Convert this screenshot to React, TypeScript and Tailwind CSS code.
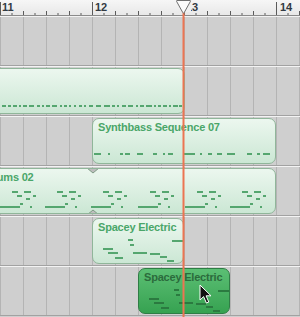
type Note = [number, number, number]; // x, y, width in page coordinates

const FONT = { fontFamily: '"Liberation Sans", Arial, sans-serif' };

// region 1: one long dotted row
const row1: Note[] = [
  [2, 105, 4], [8, 105, 3], [13, 105, 4], [19, 105, 2], [23, 105, 4], [29, 105, 5],
  [37, 105, 3], [42, 105, 2], [46, 105, 4], [52, 105, 5], [60, 105, 2], [64, 105, 3],
  [69, 105, 2], [74, 105, 2], [79, 105, 3], [84, 105, 2], [89, 105, 4], [96, 105, 5],
  [104, 105, 6], [112, 105, 3], [117, 105, 2], [122, 105, 4], [128, 105, 5], [136, 105, 2],
  [140, 105, 4], [146, 105, 6], [154, 105, 2], [158, 105, 3], [163, 105, 4], [169, 105, 2],
  [173, 105, 5], [179, 105, 3],
];

const row2: Note[] = [
  [94, 153, 7], [108, 153, 2], [120, 153, 3], [125, 153, 5], [137, 153, 6], [153, 153, 4],
  [163, 153, 2], [168, 153, 5], [183, 153, 12], [200, 153, 2], [208, 153, 4], [217, 153, 5],
  [227, 153, 8], [247, 153, 5], [257, 153, 3], [263, 153, 7],
];

// drum pattern repeats every two beats
const drums: Note[] = [12, 57, 103, 150, 197, 242].flatMap((c) => [
  [c, 191, 6], [c + 5, 195, 5], [c + 12, 191, 7], [c + 14, 198, 4], [c + 21, 195, 3],
  [c - 12, 206, 20], [c + 8, 203, 3], [c + 18, 206, 2],
] as Note[]);

const spacey: Note[] = [
  [128, 239, 5], [130, 244, 4], [103, 248, 10], [108, 252, 10], [115, 257, 8],
  [133, 252, 14], [150, 253, 10], [160, 256, 7], [167, 260, 7], [172, 240, 11],
];
const spaceyShifted: Note[] = spacey.map(([x, y, w]) => [x + 46, y + 50, w]);

function Notes({
  notes,
  left,
  top,
  color,
  notchAt,
}: {
  notes: Note[];
  left: number;
  top: number;
  color: string;
  notchAt?: number;
}) {
  return (
    <svg className="absolute inset-0 h-full w-full overflow-visible" aria-hidden>
      {notes.map(([x, y, w], i) => (
        <rect key={i} x={x - left - 1} y={y - top - 1} width={w} height={2} fill={color} />
      ))}
      {notchAt !== undefined && (
        <>
          <path d={`M${notchAt - left - 6} -1 L${notchAt - left} 4 L${notchAt - left + 6} -1 Z`} fill="#bdbdbd" stroke="#7f9a85" />
          <path d={`M${notchAt - left - 6} 46 L${notchAt - left} 41 L${notchAt - left + 6} 46 Z`} fill="#bdbdbd" stroke="#7f9a85" />
        </>
      )}
    </svg>
  );
}

function Region({
  className,
  left,
  top,
  title,
  notes,
  selected,
  notchAt,
}: {
  className: string;
  left: number;
  top: number;
  title?: string;
  notes: Note[];
  selected?: boolean;
  notchAt?: number;
}) {
  return (
    <div
      className={
        "absolute top-[1px] bottom-[1px] overflow-hidden rounded-[7px] border " +
        (selected
          ? "border-[#2f7d45] bg-gradient-to-b from-[#5bbf74] to-[#36a251] "
          : "border-[#90b69a] bg-gradient-to-b from-[#ecf7ef] to-[#cbe7d4] ") +
        className
      }
    >
      {title && (
        <div
          className={
            "whitespace-nowrap pl-[5px] pt-[2px] text-[11px] font-bold leading-[13px] tracking-[-0.2px] " +
            (selected ? "text-[#2b6b3c]" : "text-[#4aa669]")
          }
          style={FONT}
        >
          {title}
        </div>
      )}
      <Notes notes={notes} left={left} top={top} color={selected ? "#2b7a40" : "#55a66f"} notchAt={notchAt} />
    </div>
  );
}

function Track({ children }: { children?: React.ReactNode }) {
  return (
    <div className="relative h-[50px] shrink-0 border-t border-b border-t-[#f3f3f3] border-b-[#a2a2a2] bg-[repeating-linear-gradient(90deg,#b4b4b4_0px,#b4b4b4_1px,#cfcfcf_1px,#cfcfcf_23px)]">
      {children}
    </div>
  );
}

function Ruler() {
  const ticks = Array.from({ length: 27 }, (_, i) => i * 11.5);
  return (
    <div className="relative h-[16px] shrink-0 border-b border-[#8a8a8a] bg-gradient-to-b from-[#f6f6f6] to-[#e8e8e8]">
      <svg className="absolute inset-0 h-full w-full" aria-hidden>
        {ticks.map((x, i) => {
          const bar = i % 8 === 0;
          const beat = i % 2 === 0;
          const y1 = bar ? 2 : beat ? 11 : 13;
          return <line key={i} x1={x + 0.5} x2={x + 0.5} y1={y1} y2={15} stroke="#5b5b5b" strokeWidth={1} />;
        })}
      </svg>
      {/* one cell per bar, 92px wide */}
      <div className="relative flex text-[11px] font-bold leading-[12px] text-[#323a42]" style={FONT}>
        <span className="w-[92px] shrink-0 pl-[2px] pt-[1px]">11</span>
        <span className="w-[92px] shrink-0 pl-[3px] pt-[1px]">12</span>
        <span className="w-[92px] shrink-0 pl-[2px] pt-[1px]">13</span>
        <span className="w-[92px] shrink-0 pl-[4px] pt-[1px]">14</span>
      </div>
    </div>
  );
}

export default function App() {
  return (
    <div className="relative h-[317px] w-[300px] overflow-hidden bg-[#cfcfcf]">
      <div className="flex flex-col">
        <Ruler />
        <Track />
        <Track>
          <Region className="left-[-20px] w-[205px] rounded-l-none" left={-20} top={68} notes={row1} />
        </Track>
        <Track>
          <Region className="left-[92px] w-[184px]" left={92} top={118} title="Synthbass Sequence 07" notes={row2} />
        </Track>
        <Track>
          <Region
            className="left-[-21px] w-[297px]"
            left={-21}
            top={168}
            title="Drums 02"
            notes={drums}
            notchAt={92}
          />
        </Track>
        <Track>
          <Region className="left-[92px] w-[92px]" left={92} top={218} title="Spacey Electric" notes={spacey} />
        </Track>
        <Track>
          <Region
            className="left-[138px] w-[92px]"
            left={138}
            top={268}
            title="Spacey Electric"
            notes={spaceyShifted}
            selected
          />
        </Track>
      </div>

      {/* playhead: marker + line */}
      <svg className="absolute left-[176px] top-0 z-10" width="16" height="317" aria-hidden>
        <rect x="6.5" y="8" width="2" height="309" fill="#ec7552" />
        {/* backing that hides the "1" of bar 13 under the marker */}
        <rect x="8" y="0" width="7" height="12" fill="#f0f0f0" />
        <path d="M1 0.5 H14 Q15 0.5 14.3 1.6 L8.2 12.6 Q7.5 13.6 6.8 12.6 L0.7 1.6 Q0 0.5 1 0.5 Z" fill="#fbfbfb" stroke="#6f6f6f" />
      </svg>

      {/* mouse pointer */}
      <svg className="absolute left-[199px] top-[284px] z-10" width="14" height="21" aria-hidden>
        <path d="M1 1 L1 16 L4.6 12.6 L7.4 19 L9.8 18 L7.1 11.8 L12 11.8 Z" fill="#111" stroke="#fff" strokeWidth="1" strokeLinejoin="round" />
      </svg>
    </div>
  );
}
